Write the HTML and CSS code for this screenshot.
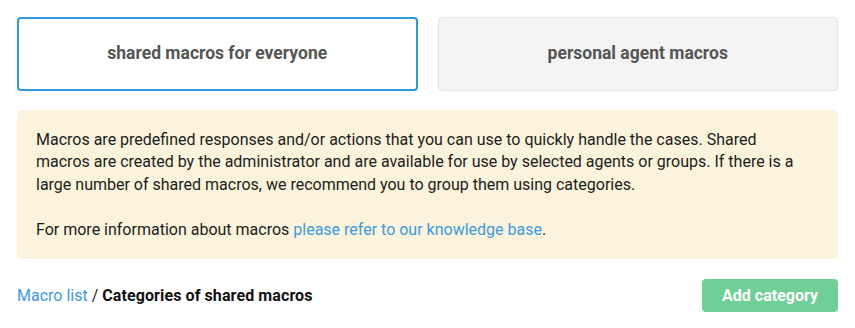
FILE: index.html
```html
<!DOCTYPE html>
<html lang="en">
<head>
  <meta charset="UTF-8" />
  <title>Macros</title>
  <link rel="stylesheet" href="styles.css">
</head>
<body>
  <div class="page">
    <div class="tabs">
      <div class="tab active">shared macros for everyone</div>
      <div class="tab">personal agent macros</div>
    </div>

    <div class="info">
      <p>Macros are predefined responses and/or actions that you can use to quickly handle the cases. Shared macros are created by the administrator and are available for use by selected agents or groups. If there is a large number of shared macros, we recommend you to group them using categories.</p>
      <p>For more information about macros <a href="#">please refer to our knowledge base</a>.</p>
    </div>

    <div class="toolbar">
      <div class="breadcrumb">
        <a href="#">Macro list</a> / <b>Categories of shared macros</b>
      </div>
      <button class="add-btn">Add category</button>
    </div>
  </div>
</body>
</html>
```

FILE: styles.css
```css
body {
  margin: 0;
  font-family: Roboto, "Liberation Sans", sans-serif;
  background: #fff;
  color: #1c1c1c;
}

.page {
  padding: 17px 17px 0 17px;
}

.tabs {
  display: grid;
  grid-template-columns: 1fr 1fr;
  gap: 20px;
}

.tab {
  height: 74px;
  box-sizing: border-box;
  display: flex;
  align-items: center;
  justify-content: center;
  padding-bottom: 2px;
  background: #f4f4f4;
  border: 1px solid #e6e6e6;
  border-radius: 4px;
  font-size: 17.5px;
  font-weight: bold;
  color: #555;
}

.tab.active {
  background: #fff;
  border: 2px solid #2f98d9;
}

.info {
  margin-top: 19px;
  background: #fbf3dc;
  border-radius: 5px;
  padding: 19px 30px 19px 19px;
  font-size: 16px;
  line-height: 1.4;
  height: 149px;
  box-sizing: border-box;
}

.info p {
  margin: 0 0 1.4em 0;
}

.info p:last-child {
  margin-bottom: 0;
}

a {
  color: #3d9be0;
  text-decoration: none;
}

.toolbar {
  margin-top: 20px;
  display: flex;
  justify-content: space-between;
  align-items: center;
}

.breadcrumb {
  font-size: 16px;
}

.breadcrumb b {
  color: #111;
  letter-spacing: 0.1px;
}

.add-btn {
  height: 33px;
  padding: 0 20px;
  border: none;
  border-radius: 4px;
  background: #6fcf97;
  color: #fff;
  font-family: inherit;
  font-size: 16px;
  font-weight: bold;
}
```
